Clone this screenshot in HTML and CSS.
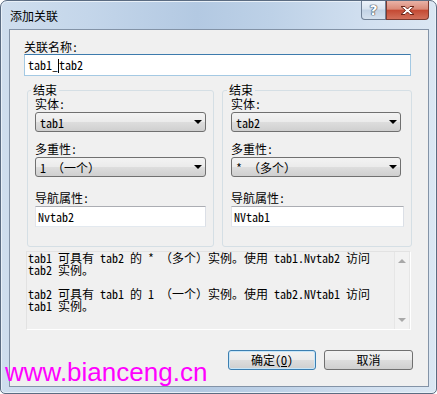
FILE: index.html
```html
<!DOCTYPE html>
<html>
<head>
<meta charset="utf-8">
<title>添加关联</title>
<link rel="stylesheet" href="styles.css">
</head>
<body>

<div class="window">
  <div class="titlebar">
    <span class="title">添加关联</span>
    <div class="caption">
      <div class="cap-btn help">?</div>
      <div class="cap-btn close">
        <svg width="17" height="11" viewBox="0 0 17 11">
          <path d="M2 1.5 L6 1.5 L8.5 4 L11 1.5 L15 1.5 L10.5 5.5 L15 9.5 L11 9.5 L8.5 7 L6 9.5 L2 9.5 L6.5 5.5 Z" fill="#fff" stroke="#6b2418" stroke-width="1" stroke-linejoin="round"/>
        </svg>
      </div>
    </div>
  </div>

  <div class="client">
    <div class="label">关联名称:</div>
    <div class="textbox focused name-box">tab1_<span class="caret"></span>tab2</div>

    <div class="ends">
      <fieldset class="end">
        <legend>结束</legend>
        <div class="label">实体:</div>
        <div class="combo"><span>tab1</span><span class="arrow"></span></div>
        <div class="label row-gap">多重性:</div>
        <div class="combo"><span>1 （一个）</span><span class="arrow"></span></div>
        <div class="label nav-gap">导航属性:</div>
        <div class="textbox">Nvtab2</div>
      </fieldset>

      <fieldset class="end end-right">
        <legend>结束</legend>
        <div class="label">实体:</div>
        <div class="combo"><span>tab2</span><span class="arrow"></span></div>
        <div class="label row-gap">多重性:</div>
        <div class="combo"><span>* （多个）</span><span class="arrow"></span></div>
        <div class="label nav-gap">导航属性:</div>
        <div class="textbox wide">NVtab1</div>
      </fieldset>
    </div>

    <div class="desc">
      <div class="desc-text">
        <p>tab1 可具有 tab2 的 * （多个）实例。使用 tab1.Nvtab2 访问 tab2 实例。</p>
        <p>tab2 可具有 tab1 的 1 （一个）实例。使用 tab2.NVtab1 访问 tab1 实例。</p>
      </div>
      <div class="scrollbar">
        <span class="sb-up"></span>
        <span class="sb-down"></span>
      </div>
    </div>

    <div class="buttons">
      <div class="btn default">确定(<u>O</u>)</div>
      <div class="btn cancel">取消</div>
    </div>
  </div>
</div>

<div class="watermark">www.bianceng.cn</div>

</body>
</html>
```

FILE: styles.css
```css
body {
  margin: 0;
  font-family: "Noto Sans Mono CJK SC", "Noto Sans CJK SC", monospace;
  font-size: 12px;
  color: #000000;
  background: #ffffff;
}

/* window frame */
.window {
  width: 437px;
  height: 394px;
  box-sizing: border-box;
  display: flex;
  flex-direction: column;
  padding: 0 7px 6px 8px;
  border: 1px solid #5b6c82;
  border-radius: 7px 7px 5px 5px;
  background: linear-gradient(90deg, #cfdeee 0%, #c4d6ea 20%, #b3c9e2 45%, #bdd1e7 62%, #d2e0f0 85%, #dbe7f3 100%);
  box-shadow: inset 0 0 0 1px #e8f0f8;
}

.titlebar {
  height: 28px;
  display: flex;
  align-items: flex-start;
}

.title {
  margin: 8px 0 0 1px;
  line-height: 14px;
  font-family: "Noto Sans CJK SC", sans-serif;
}

.caption {
  margin-left: auto;
  display: flex;
}

.cap-btn {
  height: 19px;
  box-sizing: border-box;
  border: 1px solid #6f7f94;
  border-top: none;
  display: flex;
  align-items: center;
  justify-content: center;
}

.help {
  width: 25px;
  border-radius: 0 0 0 4px;
  background: linear-gradient(#edf3fa 0%, #d8e3ef 45%, #c2d2e4 50%, #d5e1ee 100%);
  color: #ffffff;
  font-family: "DejaVu Sans", sans-serif;
  font-weight: bold;
  font-size: 14px;
  text-shadow: 0 0 1px #2b3a4c, 0 0 1px #2b3a4c, 0 0 1px #2b3a4c;
}

.close {
  width: 43px;
  border-left: 1px solid #8a4a40;
  border-color: #7a3a30;
  border-radius: 0 0 4px 0;
  background: linear-gradient(#e9b2a6 0%, #da8a78 45%, #c44a34 52%, #d2705b 100%);
}

/* client area */
.client {
  flex: 1;
  background: #f0f0f0;
  border: 1px solid #8393a7;
  padding: 10px 0 0 14px;
}

.label {
  height: 14px;
  line-height: 14px;
}

.textbox {
  box-sizing: border-box;
  width: 171px;
  height: 21px;
  margin-top: 1px;
  padding-left: 2px;
  line-height: 19px;
  background: #ffffff;
  border: 1px solid;
  border-color: #abadb3 #dbdfe6 #e3e9ef #e2e3ea;
}

.textbox.focused {
  border-color: #3d7bad #a4c9e3 #a4c9e3 #a4c9e3;
}

.name-box {
  width: 387px;
  height: 22px;
  margin-top: 0;
  padding-left: 3px;
  line-height: 20px;
}

.caret {
  display: inline-block;
  width: 1px;
  height: 14px;
  background: #000000;
  vertical-align: -3px;
}

.ends {
  display: flex;
  gap: 8px;
  margin: 8px 0 0 3px;
}

.end {
  width: 187px;
  box-sizing: border-box;
  margin: 0;
  padding: 1px 7px 19px 7px;
  border: 1px solid #d5dfe5;
  border-radius: 3px;
}

.end-right {
  width: 188px;
  padding-left: 8px;
}

.end legend {
  margin-left: -4px;
  padding: 0 2px;
  line-height: 12px;
}

.row-gap {
  margin-top: 10px;
}

.nav-gap {
  margin-top: 14px;
}

.combo {
  box-sizing: border-box;
  width: 171px;
  height: 20px;
  margin-top: 1px;
  padding: 0 3px 0 4px;
  display: flex;
  align-items: center;
  border: 1px solid #707070;
  border-radius: 3px;
  background: linear-gradient(#f3f3f3 0%, #ebebeb 48%, #dddddd 52%, #cfcfcf 100%);
}

.end-right .combo {
  width: 170px;
}

.textbox.wide {
  width: 173px;
}

.arrow {
  margin-left: auto;
  width: 0;
  height: 0;
  border-left: 4px solid transparent;
  border-right: 4px solid transparent;
  border-top: 4px solid #000000;
}

/* description box */
.desc {
  display: flex;
  box-sizing: border-box;
  width: 385px;
  height: 79px;
  margin: 4px 0 0 2px;
  border: 1px solid #dcdcdc;
  border-color: #e2e2e2 #ffffff #ffffff #e2e2e2;
}

.desc-text {
  flex: 1;
  padding: 0 0 0 1px;
  line-height: 12px;
}

.desc-text p {
  margin: 0 0 12px 0;
}

.scrollbar {
  width: 16px;
  box-sizing: border-box;
  border-left: 1px solid #e6e6e6;
  border-right: 1px solid #e6e6e6;
  background: #f2f2f2;
  display: flex;
  flex-direction: column;
  align-items: center;
  justify-content: space-between;
  padding: 7px 0 7px 0;
}

.sb-up {
  width: 0;
  height: 0;
  border-left: 4px solid transparent;
  border-right: 4px solid transparent;
  border-bottom: 4px solid #a8a8a8;
}

.sb-down {
  width: 0;
  height: 0;
  border-left: 4px solid transparent;
  border-right: 4px solid transparent;
  border-top: 4px solid #a8a8a8;
}

/* buttons */
.buttons {
  display: flex;
  justify-content: flex-end;
  gap: 8px;
  margin-top: 20px;
  padding-right: 15px;
}

.btn {
  box-sizing: border-box;
  width: 89px;
  height: 20px;
  line-height: 18px;
  text-align: center;
  border: 1px solid #707070;
  border-radius: 3px;
  background: linear-gradient(#f2f2f2 0%, #ebebeb 48%, #dddddd 52%, #cfcfcf 100%);
}

.btn.default {
  width: 88px;
  border-color: #3c7fb1;
  box-shadow: inset 0 0 0 1px #c8e6f8;
}

.watermark {
  position: absolute;
  left: 5px;
  top: 359px;
  font-family: "Liberation Sans", Arial, sans-serif;
  font-size: 26px;
  line-height: 26px;
  color: #ff00ff;
}
```
